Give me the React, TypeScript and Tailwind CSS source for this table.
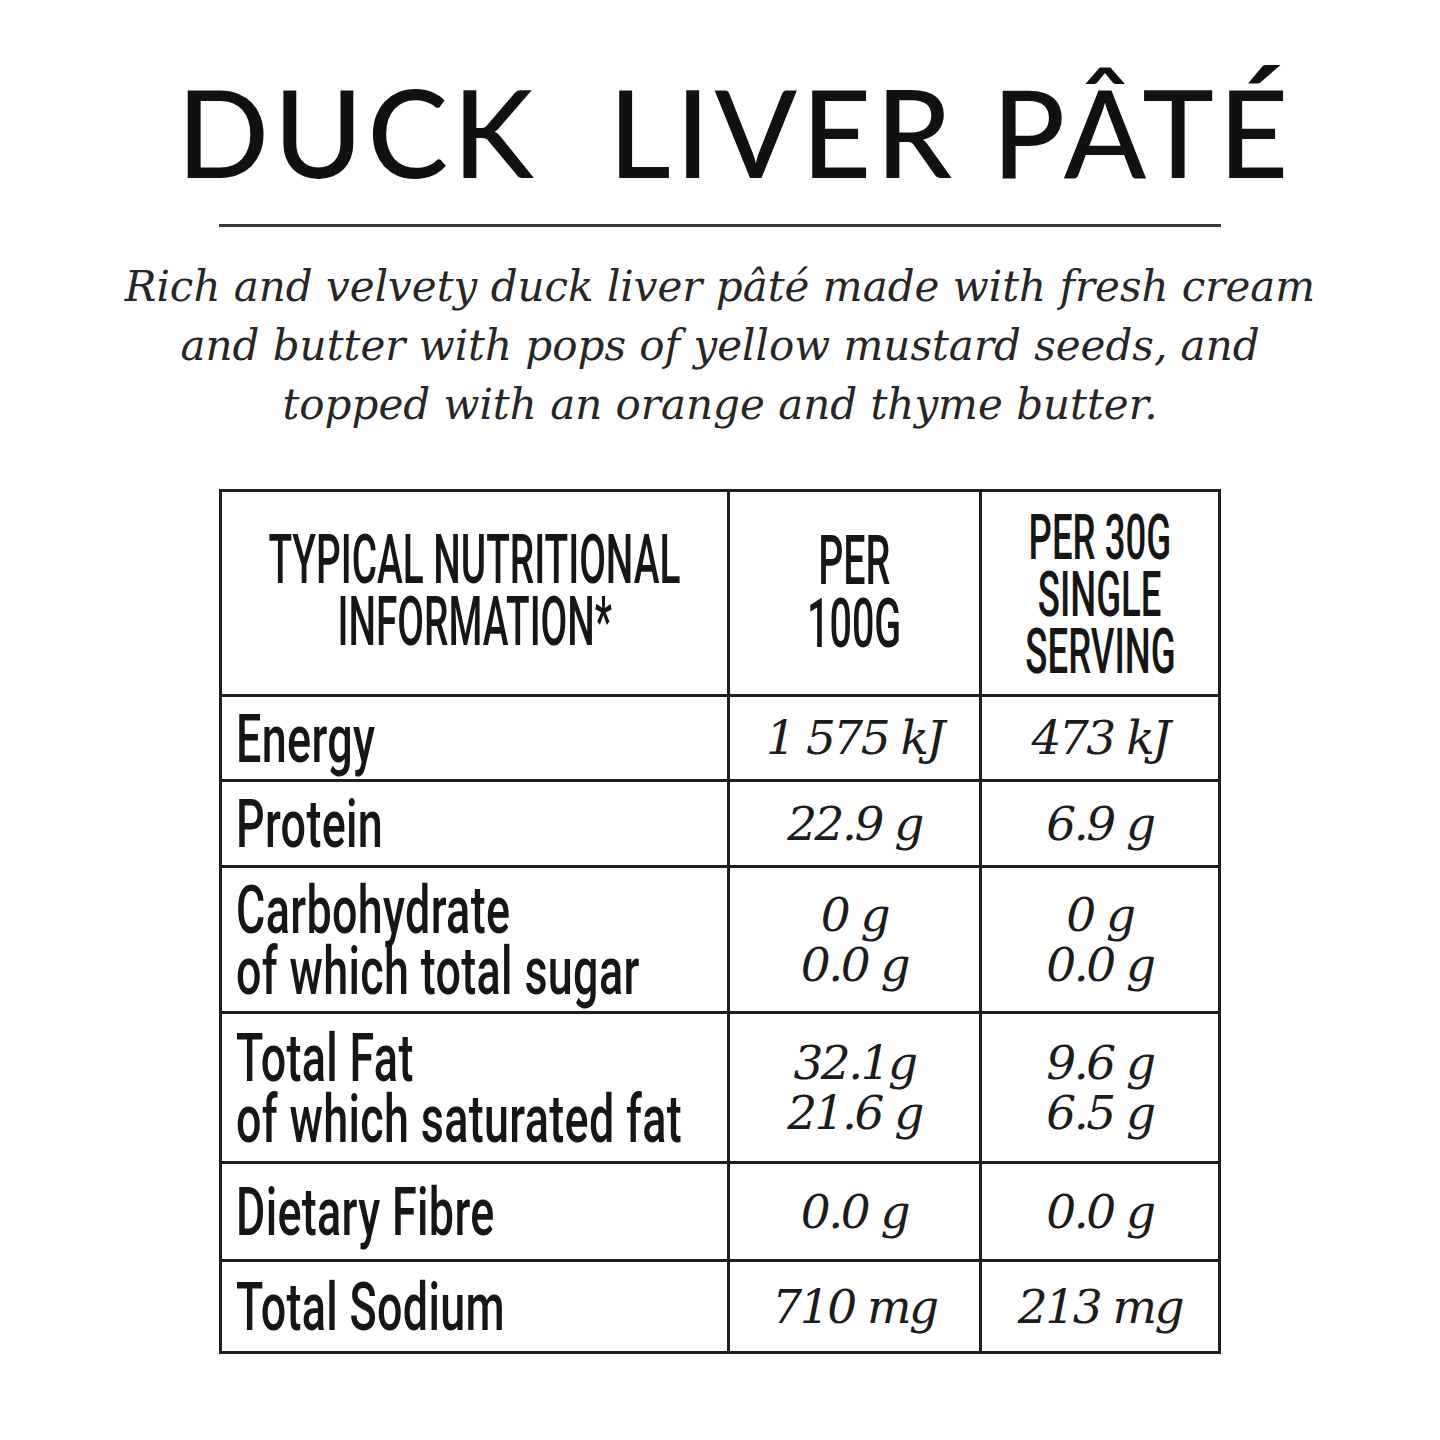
import React from "react";

const cond = "font-['Roboto','Liberation_Sans',sans-serif] font-medium text-[#161616]";
const serifIt = "font-['DejaVu_Serif','Liberation_Serif',serif] italic text-[#1c1c1c]";

function Label({ lines }: { lines: string[] }) {
  return (
    <div className="flex flex-col">
      {lines.map((l, i) => (
        <span
          key={i}
          className={`${cond} block whitespace-nowrap text-[67px] leading-[61px] origin-left scale-x-[0.67] tracking-[0.5px]`}
        >
          {l}
        </span>
      ))}
    </div>
  );
}

function Val({ lines }: { lines: string[] }) {
  return (
    <div className="flex flex-col items-center">
      {lines.map((l, i) => (
        <span key={i} className={`${serifIt} block whitespace-nowrap text-[47px] leading-[50px] tracking-[-2.5px]`}>
          {l}
        </span>
      ))}
    </div>
  );
}

function Head({ lines, cls }: { lines: string[]; cls: string }) {
  return (
    <div className="flex flex-col items-center">
      {lines.map((l, i) => (
        <span key={i} className={`${cond} block whitespace-nowrap origin-center ${cls}`}>
          {l}
        </span>
      ))}
    </div>
  );
}

const rows: { h: string; label: string[]; a: string[]; b: string[] }[] = [
  { h: "h-[85px]", label: ["Energy"], a: ["1 575 kJ"], b: ["473 kJ"] },
  { h: "h-[86px]", label: ["Protein"], a: ["22.9 g"], b: ["6.9 g"] },
  { h: "h-[146px]", label: ["Carbohydrate", "of which total sugar"], a: ["0 g", "0.0 g"], b: ["0 g", "0.0 g"] },
  { h: "h-[150px]", label: ["Total Fat", "of which saturated fat"], a: ["32.1g", "21.6 g"], b: ["9.6 g", "6.5 g"] },
  { h: "h-[98px]", label: ["Dietary Fibre"], a: ["0.0 g"], b: ["0.0 g"] },
  { h: "h-[92px]", label: ["Total Sodium"], a: ["710 mg"], b: ["213 mg"] },
];

const cell = "border-r-[3px] border-b-[3px] border-[#1e1e1e]";

export default function App() {
  return (
    <div className="w-[1440px] h-[1440px] bg-white flex flex-col items-center">
      <h1 className="mt-[62px] pl-[30px] font-['Lato','Noto_Sans',sans-serif] font-medium text-[121px] leading-[140px] tracking-[4.6px] text-[#111] whitespace-pre">
        {"DUCK  LIVER PÂTÉ"}
      </h1>
      <div className="mt-[22px] w-[1002px] h-[3px] bg-[#3a3a3a]" />
      <p className={`${serifIt} mt-[30px] text-center text-[42px] leading-[59px] tracking-[0px] text-[#262626]`}>
        Rich and velvety duck liver pâté made with fresh cream
        <br />
        and butter with pops of yellow mustard seeds, and
        <br />
        topped with an orange and thyme butter.
      </p>
      <div className="mt-[55px] w-[1002px] border-l-[3px] border-t-[3px] border-[#1e1e1e] grid grid-cols-[508px_252px_239px]">
        <div className={`h-[205px] ${cell} flex items-center justify-center pb-[4px]`}>
          <Head
            lines={["TYPICAL NUTRITIONAL", "INFORMATION*"]}
            cls="text-[68px] leading-[62px] scale-x-[0.57]"
          />
        </div>
        <div className={`h-[205px] ${cell} flex items-center justify-center`}>
          <Head lines={["PER", "100G"]} cls="text-[68px] leading-[63px] scale-x-[0.58]" />
        </div>
        <div className={`h-[205px] ${cell} flex items-center justify-center pt-[2px]`}>
          <Head lines={["PER 30G", "SINGLE", "SERVING"]} cls="text-[63px] leading-[57px] scale-x-[0.58]" />
        </div>
        {rows.map((r, i) => (
          <React.Fragment key={i}>
            <div className={`${r.h} ${cell} flex items-center pl-[14px] pt-[2px]`}>
              <Label lines={r.label} />
            </div>
            <div className={`${r.h} ${cell} flex items-center justify-center`}>
              <Val lines={r.a} />
            </div>
            <div className={`${r.h} ${cell} flex items-center justify-center`}>
              <Val lines={r.b} />
            </div>
          </React.Fragment>
        ))}
      </div>
    </div>
  );
}
